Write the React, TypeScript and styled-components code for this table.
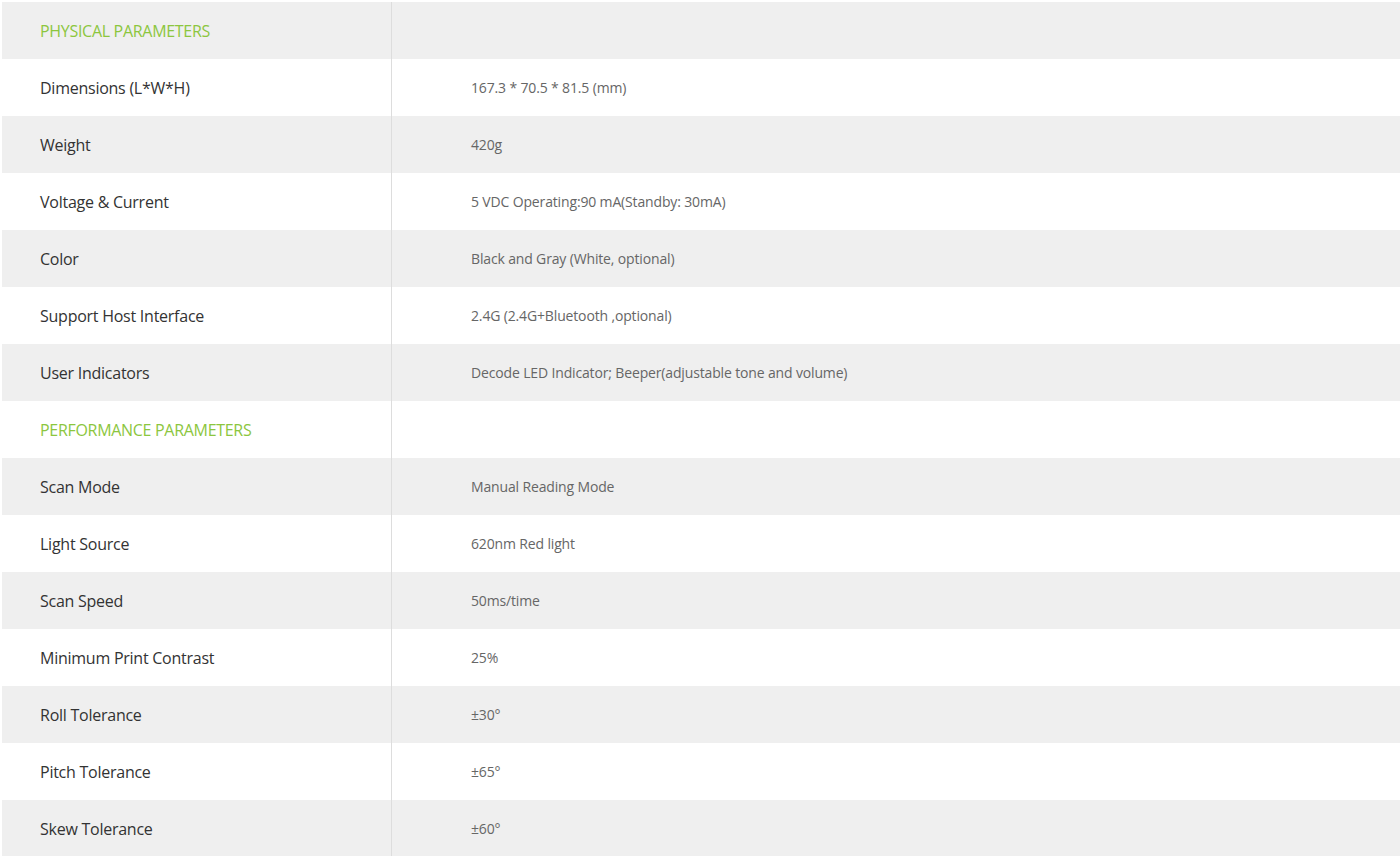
import React from 'react';
import styled, { createGlobalStyle } from 'styled-components';

const GlobalStyle = createGlobalStyle`
  html, body {
    margin: 0;
    padding: 0;
    background: #ffffff;
  }
  body {
    font-family: "Open Sans", "Liberation Sans", sans-serif;
  }
`;

const Wrapper = styled.div`
  padding: 2px 0 0 2px;
`;

const Table = styled.div`
  display: flex;
  flex-direction: column;
`;

const Row = styled.div<{ $shaded: boolean }>`
  display: grid;
  grid-template-columns: 390px 1fr;
  height: 57px;
  background: ${p => (p.$shaded ? '#efefef' : '#ffffff')};
`;

const LabelCell = styled.div<{ $section?: boolean }>`
  display: flex;
  align-items: center;
  padding-left: 38px;
  border-right: 1px solid #dddddd;
  font-size: 16px;
  letter-spacing: ${p => (p.$section ? '-0.3px' : '-0.25px')};
  color: ${p => (p.$section ? '#8cc63e' : '#333333')};
`;

const ValueCell = styled.div`
  display: flex;
  align-items: center;
  padding-left: 79px;
  font-size: 14px;
  letter-spacing: -0.15px;
  color: #666666;
`;

type Spec = { label: string; value?: string; section?: boolean };

const specs: Spec[] = [
  { label: 'PHYSICAL PARAMETERS', section: true },
  { label: 'Dimensions (L*W*H)', value: '167.3 * 70.5 * 81.5 (mm)' },
  { label: 'Weight', value: '420g' },
  { label: 'Voltage & Current', value: '5 VDC Operating:90 mA(Standby: 30mA)' },
  { label: 'Color', value: 'Black and Gray (White, optional)' },
  { label: 'Support Host Interface', value: '2.4G (2.4G+Bluetooth ,optional)' },
  { label: 'User Indicators', value: 'Decode LED Indicator; Beeper(adjustable tone and volume)' },
  { label: 'PERFORMANCE PARAMETERS', section: true },
  { label: 'Scan Mode', value: 'Manual Reading Mode' },
  { label: 'Light Source', value: '620nm Red light' },
  { label: 'Scan Speed', value: '50ms/time' },
  { label: 'Minimum Print Contrast', value: '25%' },
  { label: 'Roll Tolerance', value: '±30°' },
  { label: 'Pitch Tolerance', value: '±65°' },
  { label: 'Skew Tolerance', value: '±60°' },
];

const App = () => {
  return (
    <>
      <GlobalStyle />
      <Wrapper>
        <Table>
          {specs.map((s, i) => (
            <Row key={s.label} $shaded={i % 2 === 0}>
              <LabelCell $section={s.section}>{s.label}</LabelCell>
              <ValueCell>{s.value}</ValueCell>
            </Row>
          ))}
        </Table>
      </Wrapper>
    </>
  );
};

export default App;
